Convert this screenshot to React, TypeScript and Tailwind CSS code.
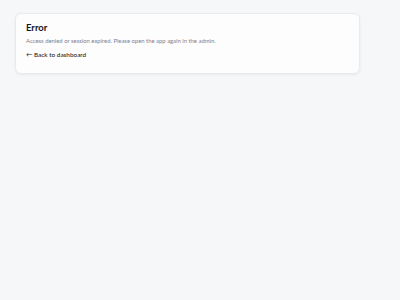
export default function App() {
  return (
    <div
      className="min-h-screen bg-[#f6f7f9] px-[15px] pt-[13px]"
      style={{ fontFamily: "Lato, 'Noto Sans', sans-serif" }}
    >
      <div className="w-[345px] rounded-[6px] border border-[#e9eaee] bg-[#fdfdfd] px-[10px] pt-[8px] pb-[14px] shadow-[0_1px_3px_rgba(0,0,0,0.06)]">
        <h1 className="text-[9.5px] font-bold leading-[12px] text-[#16161d]">Error</h1>
        <p className="mt-[3px] text-[5.9px] leading-[8px] text-[#7d7f92]">
          Access denied or session expired. Please open the app again in the admin.
        </p>
        <a href="#" className="mt-[6px] block text-[6.4px] font-medium leading-[8px] text-[#1c1c24]">
          ← Back to dashboard
        </a>
      </div>
    </div>
  )
}
